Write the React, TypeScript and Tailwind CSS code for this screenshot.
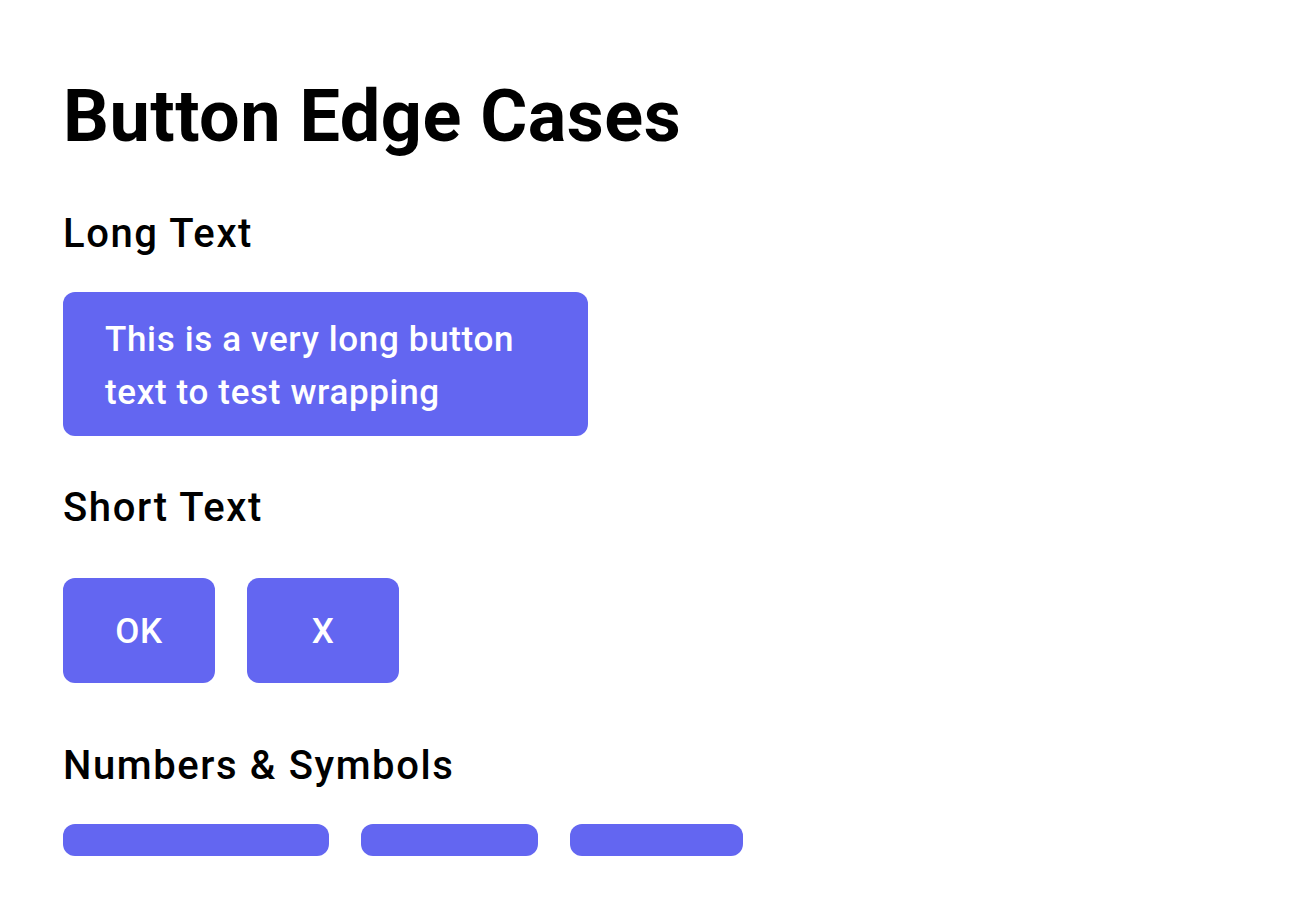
export default function App() {
  return (
    <div
      className="min-h-screen bg-white px-[63px] pt-[74px] text-black"
      style={{ fontFamily: 'Roboto, "Noto Sans", sans-serif' }}
    >
      <h1 className="text-[72px] font-bold leading-[86px] tracking-[0.5px]">Button Edge Cases</h1>

      <h2 className="mt-[50px] text-[40px] font-medium leading-[48px] tracking-[1.6px]">Long Text</h2>
      <div className="mt-[34px]">
        <button className="w-[525px] rounded-xl bg-[#6366f1] px-[42px] pb-[17px] pt-[21px] text-left text-[35px] font-medium leading-[53px] tracking-[0.65px] text-white">
          This is a very long button text to test wrapping
        </button>
      </div>

      <h2 className="mt-[48px] text-[40px] font-medium leading-[48px] tracking-[1.6px]">Short Text</h2>
      <div className="mt-[46px] flex gap-8">
        <button className="h-[105px] w-[152px] rounded-xl bg-[#6366f1] pt-1 text-[35px] font-medium tracking-[0.65px] text-white">
          OK
        </button>
        <button className="h-[105px] w-[152px] rounded-xl bg-[#6366f1] pt-1 text-[35px] font-medium tracking-[0.65px] text-white">
          X
        </button>
      </div>

      <h2 className="mt-[59px] text-[40px] font-medium leading-[48px] tracking-[1.6px]">Numbers &amp; Symbols</h2>
      <div className="mt-[34px] flex gap-8">
        <button className="h-8 w-[266px] rounded-xl bg-[#6366f1]" />
        <button className="h-8 w-[177px] rounded-xl bg-[#6366f1]" />
        <button className="h-8 w-[173px] rounded-xl bg-[#6366f1]" />
      </div>
    </div>
  );
}
